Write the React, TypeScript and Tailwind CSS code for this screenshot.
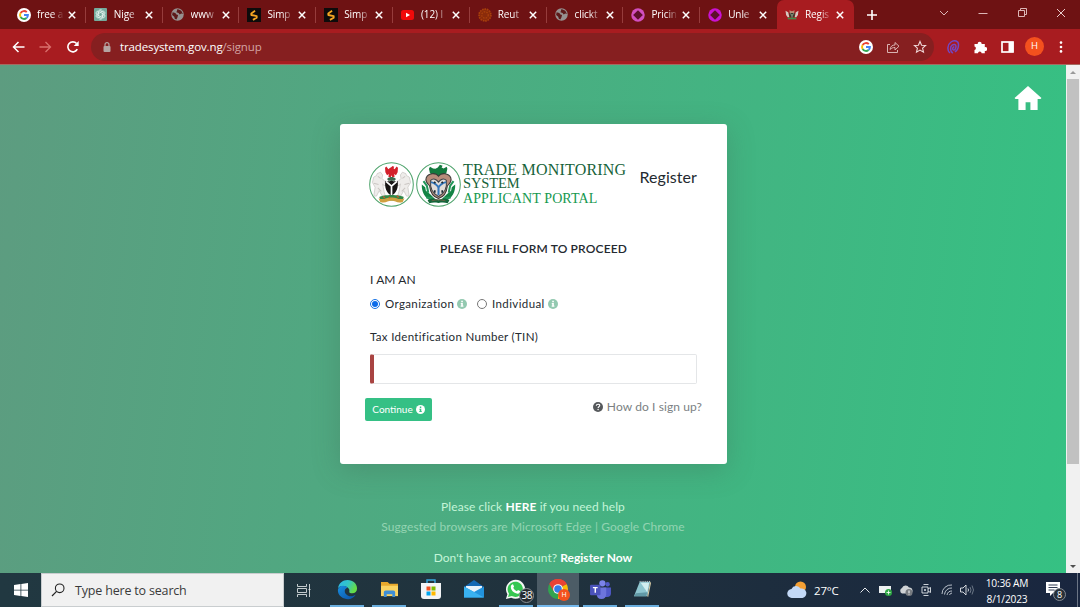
import React from "react";
import type { ReactNode } from "react";

type IconProps = { className?: string };

const Google = ({ className }: IconProps) => (
  <svg viewBox="0 0 48 48" className={className}>
    <circle cx="24" cy="24" r="24" fill="#fff" />
    <g fill="none" strokeWidth="6.5">
      <path d="M33.6 14.4A13.5 13.5 0 0 0 12.3 17.2" stroke="#ea4335" />
      <path d="M12.3 17.2A13.5 13.5 0 0 0 12.3 30.8" stroke="#fbbc05" />
      <path d="M12.3 30.8A13.5 13.5 0 0 0 32.7 34.3" stroke="#34a853" />
      <path d="M32.7 34.3A13.5 13.5 0 0 0 37.5 24H24" stroke="#4285f4" />
    </g>
  </svg>
);

const ChatGpt = () => (
  <svg viewBox="0 0 26 26" className="size-[13px]">
    <rect width="26" height="26" rx="2" fill="#74aa9c" />
    <g fill="none" stroke="#e6f3ef" strokeWidth="1.5">
      {[0, 60, 120, 180, 240, 300].map((a) => (
        <path key={a} transform={`rotate(${a} 13 13)`} d="M9 12V7.500a4 4 0 0 1 7.500-2M10 10.500l6-3.500 4 2.300" />
      ))}
    </g>
  </svg>
);

const Globe = () => (
  <svg viewBox="0 0 24 24" className="size-[13px]">
    <circle cx="12" cy="12" r="11.500" fill="#969090" />
    <path d="M3 8l5 1 2 3 3 1-1 4-2 4-3-1-1-4-4-3zM12 2l7 3 3 6-3-1-3 2-2-3-4-1 1-3z" fill="#5c1a1a" />
  </svg>
);

const Simp = () => (
  <svg viewBox="0 0 26 26" className="size-[14px]">
    <rect width="26" height="26" fill="#0d0b0b" />
    <path d="M15 5l-7 5v3l10 2v3l-7 4" fill="none" stroke="#f5a623" strokeWidth="3.400" strokeLinejoin="round" />
  </svg>
);

const YouTube = () => (
  <svg viewBox="0 0 26 20" className="h-[10px] w-[13px]">
    <rect width="26" height="20" rx="5" fill="#f00a0a" />
    <path d="M10 5.500l8 4.500-8 4.500z" fill="#fff" />
  </svg>
);

const Reuters = () => (
  <svg viewBox="0 0 26 26" className="size-[14px]">
    <circle cx="13" cy="13" r="11" fill="#8a2b0a" />
    <circle cx="13" cy="13" r="11" fill="none" stroke="#a8400c" strokeWidth="3" strokeDasharray="3 1.500" />
    <circle cx="13" cy="13" r="6" fill="none" stroke="#a8400c" strokeWidth="2.500" strokeDasharray="3 2" />
  </svg>
);

const Ring = ({ className }: IconProps) => (
  <svg viewBox="0 0 26 26" className={`size-[14px] ${className}`}>
    <circle cx="13" cy="13" r="12.500" fill="currentColor" />
    <path d="M13 4L22 13 13 22 4 13z" fill="#5e0f2b" />
  </svg>
);

const Arms = () => (
  <svg viewBox="0 0 26 20" className="h-[11px] w-[14px]">
    <path d="M1 3l5 3 2 9H5L2 11zM25 3l-5 3-2 9h3l3-4z" fill="#d6c8c0" />
    <path d="M8 2l5 2 5-2-1 5H9z" fill="#b98a74" />
    <path d="M8 7h10v6l-5 4-5-4z" fill="#3b3a2c" />
    <path d="M10 8l3 4 3-4M13 12v4" stroke="#b9d2b9" strokeWidth="1.300" fill="none" />
    <path d="M5 16h16v3H5z" fill="#3f8f4a" />
  </svg>
);

const Cross = () => (
  <svg viewBox="0 0 8 8" className="size-[8px] shrink-0">
    <path d="M.8.8l6.400 6.400M7.200.8L.8 7.200" stroke="#fff" strokeWidth="1.500" />
  </svg>
);

type TabInfo = { title: string; icon: ReactNode };

const tabs: TabInfo[] = [
  { title: "free a", icon: <Google className="size-[14px]" /> },
  { title: "Nige", icon: <ChatGpt /> },
  { title: "www", icon: <Globe /> },
  { title: "Simp", icon: <Simp /> },
  { title: "Simp", icon: <Simp /> },
  { title: "(12) l", icon: <YouTube /> },
  { title: "Reut", icon: <Reuters /> },
  { title: "clickt", icon: <Globe /> },
  { title: "Pricin", icon: <Ring className="text-[#d24fc0]" /> },
  { title: "Unle", icon: <Ring className="text-[#c913d2]" /> },
];

function TabContent({ title, icon }: TabInfo) {
  return (
    <>
      <span className="flex w-[14px] shrink-0 justify-center">{icon}</span>
      <span className="ml-[6px] w-[27px] overflow-hidden whitespace-nowrap text-[10px] tracking-[-0.100px] text-white [mask-image:linear-gradient(to_right,#000_55%,transparent)]">
        {title}
      </span>
      <span className="ml-[4px] flex">
        <Cross />
      </span>
    </>
  );
}

function TabStrip() {
  return (
    <div className="flex h-[29px] bg-[#6e1213] pl-[9px]">
      {tabs.map((t, i) => (
        <div key={i} className="flex w-[76.800px] shrink-0 items-center pl-[8px]">
          <TabContent {...t} />
          {i < tabs.length - 1 && <span className="ml-auto h-[16px] w-px bg-[#963c3c]" />}
        </div>
      ))}
      <div className="flex w-[77px] shrink-0 items-center rounded-t-[7px] bg-[#a81c20] pl-[8px]">
        <TabContent title="Regis" icon={<Arms />} />
      </div>
      <div className="flex flex-1 items-center">
        <svg viewBox="0 0 12 12" className="ml-[12px] size-[12px]">
          <path d="M6 1v10M1 6h10" stroke="#fff" strokeWidth="1.600" />
        </svg>
        <div className="mb-[4px] ml-auto mr-[14px] flex items-center gap-[29px]">
          <svg viewBox="0 0 10 10" className="size-[10px]">
            <path d="M1 3l4 4 4-4" fill="none" stroke="#dcb6b6" />
          </svg>
          <svg viewBox="0 0 10 10" className="size-[10px]">
            <path d="M.5 5.500h9" stroke="#dcb6b6" />
          </svg>
          <svg viewBox="0 0 10 10" className="size-[10px]">
            <path d="M1.500 2.500h6v6h-6zM3.500 2.500v-2h6v6h-2" fill="none" stroke="#dcb6b6" />
          </svg>
          <svg viewBox="0 0 10 10" className="size-[10px]">
            <path d="M1 1l8 8M9 1L1 9" stroke="#e8cccc" />
          </svg>
        </div>
      </div>
    </div>
  );
}

function Toolbar() {
  return (
    <div className="flex h-[36px] items-center border-b border-[#a56a60] bg-[#a81c20] pl-[12px]">
      <svg viewBox="0 0 13 12" className="h-[12px] w-[13px]">
        <path d="M12.500 6H1.500M6.500 1l-5 5 5 5" fill="none" stroke="#fff" strokeWidth="1.500" />
      </svg>
      <svg viewBox="0 0 13 12" className="ml-[14px] h-[12px] w-[13px]">
        <path d="M.5 6h11M6.500 1l5 5-5 5" fill="none" stroke="#d9706c" strokeWidth="1.300" />
      </svg>
      <svg viewBox="0 0 12 12" className="ml-[15px] size-[12px]">
        <path d="M10.300 8.200A5 5 0 1 1 9.600 2.500" fill="none" stroke="#fff" strokeWidth="1.600" />
        <path d="M11.700 0v5H6.700z" fill="#fff" />
      </svg>
      <div className="ml-[12px] flex h-[28px] w-[843px] items-center rounded-full bg-[#861f20] pl-[12px]">
        <svg viewBox="0 0 8 10" className="h-[10px] w-[8px]">
          <path d="M2 4.500V2.700a2 2 0 0 1 4 0v1.800" fill="none" stroke="#b5a5a3" strokeWidth="1.200" />
          <rect x=".5" y="4" width="7" height="6" rx="1" fill="#b5a5a3" />
        </svg>
        <span className="ml-[9px] text-[11.500px] tracking-[-0.130px] text-white">
          tradesystem.gov.ng<span className="text-[#d3a3a3]">/signup</span>
        </span>
        <div className="ml-auto mr-[7px] flex items-center gap-[13px]">
          <Google className="size-[14px]" />
          <svg viewBox="0 0 14 14" className="size-[14px]">
            <path d="M4 4.500H1.500v8h10V10M4 9.500c.5-3.200 2.300-4.500 5-4.500V2.500L13 6.200 9 10V7.500c-2 0-3.500.5-5 2z" fill="none" stroke="#d9b3b1" strokeLinejoin="round" />
          </svg>
          <svg viewBox="0 0 14 14" className="size-[14px]">
            <path d="M7 1.500l1.600 3.700 4 .3-3 2.700.9 4L7 10.100l-3.500 2.100.9-4-3-2.700 4-.3z" fill="none" stroke="#f0dada" strokeWidth="1.100" />
          </svg>
        </div>
      </div>
      <div className="ml-[12px] flex items-center">
        <svg viewBox="0 0 14 14" className="size-[14px]">
          <g fill="none" stroke="#7247c4" strokeWidth="1.500" strokeLinecap="round">
            <path d="M3.500 12.500C1 10 1.500 4.500 5 2s7.500-1 7.500 2.500c0 3-.7 5.500-3 7" />
            <path d="M6.500 12.800C4 11 4 7 6 5.300s4-.8 4 1.200-1.500 4-2.800 3.300-.2-2.500.6-2.800" />
          </g>
        </svg>
        <svg viewBox="0 0 14 14" className="ml-[13px] size-[14px]">
          <path d="M1.500 4h3.300a1.900 1.900 0 1 1 3.700 0h3.300v3.200a1.900 1.900 0 1 1 0 3.700v2.300H8.600a1.800 1.800 0 0 0-3.600 0H1.500V10a1.800 1.800 0 0 0 0-3.500z" fill="#fff" />
        </svg>
        <svg viewBox="0 0 13 12" className="ml-[14px] h-[12px] w-[13px]">
          <rect x="1" y="1" width="11" height="10" fill="none" stroke="#fff" strokeWidth="1.700" />
          <rect x="7.500" y="1" width="5" height="10" fill="#fff" />
        </svg>
        <span className="ml-[11px] flex size-[19px] items-center justify-center rounded-full bg-[#f4511e] text-[9.500px] text-white">H</span>
        <svg viewBox="0 0 4 12" className="ml-[15px] h-[12px] w-[4px]">
          <circle cx="2" cy="1.600" r="1.300" fill="#fff" />
          <circle cx="2" cy="6" r="1.300" fill="#fff" />
          <circle cx="2" cy="10.400" r="1.300" fill="#fff" />
        </svg>
      </div>
    </div>
  );
}

const CoatOfArms = () => (
  <svg viewBox="0 0 132 132" className="size-[45px]">
    <circle cx="66" cy="66" r="64" fill="#fff" stroke="#4da36b" strokeWidth="3" />
    <g fill="#eeecea" stroke="#c6c2bf" strokeWidth="2">
      <path d="M24 34l10-4 6 8-2 10 10 10 2 10-6 2-4-6 4 22 4 14-8 2-10-18-8 16h-8l4-26-8-14 4-16 8-4z" />
      <path d="M108 34l-10-4-6 8 2 10-10 10-2 10 6 2 4-6-4 22-4 14 8 2 10-18 8 16h8l-4-26 8-14-4-16-8-4z" />
    </g>
    <path d="M26 42l8 6M14 62l14 4M26 76l10 10M106 42l-8 6M118 62l-14 4M106 76l-10 10" stroke="#cbc6c3" strokeWidth="3" />
    <path d="M66 15l3-3 5 2-2 4 3 3 6-8 4 4-1 13-5 9-5-4 1 9h-7l-2-5-2 5h-7l1-9-5 4-5-9-1-13 4-4 6 8 3-3z" fill="#d3202b" />
    <path d="M53 50c4-5 8-6 13-6s9 1 13 6l-4 5H57z" fill="#3c6b50" />
    <path d="M48 55c7 3 12 2 18-1 6 3 11 4 18 1 3 20-3 36-18 44-15-8-21-24-18-44z" fill="#171514" />
    <path d="M50 57l16 14 16-14M66 70v28" fill="none" stroke="#fff" strokeWidth="5" />
    <path d="M30 103c12-8 60-8 72 0l-4 10H34z" fill="#328848" />
    <path d="M28 106c16 8 24-4 38-2 14-2 22 10 38 2l-5 11c-15 6-23-4-33-3-10-1-18 9-33 3z" fill="#d0a040" />
    <path d="M42 101l4 5M82 99l5 5M58 104h4" stroke="#c5592c" strokeWidth="4" />
  </svg>
);

const CustomsBadge = () => (
  <svg viewBox="0 0 132 132" className="size-[45px]">
    <circle cx="66" cy="66" r="64" fill="#fff" stroke="#4da36b" strokeWidth="3" />
    <path d="M64 16l6-8 8 3-3 5 6 3 9-5 2 6-3 13-9 6-8-2-3 6h-8l-3-6-8 2-9-6-3-13 3-6 9 5 7 1z" fill="#137a3e" />
    <path d="M17 66l10 8 2 10 12 10 14 14-10 6C26 106 16 88 17 66zM115 66l-10 8-2 10-12 10-14 14 10 6c19-8 29-26 28-48z" fill="#128444" />
    <path d="M22 56l10 14 4 20M110 56l-10 14-4 20M30 104l20 2M102 104l-20 2" stroke="#23965a" strokeWidth="6" fill="none" />
    <path d="M66 42c8-12 30-10 36 4 4 12-4 18-10 24-2 20-12 33-26 37-14-4-24-17-26-37-6-6-14-12-10-24 6-14 28-16 36-4z" fill="#b88d7b" stroke="#3a3a38" strokeWidth="3" />
    <path d="M43 54c8-8 17-3 23 5 6-8 15-13 23-5 2 18-4 38-23 47-19-9-25-29-23-47z" fill="#e2ddd8" stroke="#3b4248" strokeWidth="3" />
    <path d="M44 59c11 3 18 8 22 16 4-8 11-13 22-16M66 75v22" stroke="#3476ba" strokeWidth="6" fill="none" />
    <path d="M55 83v7M77 83v7M57 62l-4-4M75 62l4-4" stroke="#1b2931" strokeWidth="5" />
    <path d="M34 112c10-7 22-6 32 0 10-6 22-7 32 0l-5 9c-9-3-16-3-27-1-11-2-18-2-27 1z" fill="#14653a" />
    <path d="M46 114c12-4 28-4 40 0" stroke="#6f6044" strokeWidth="3" fill="none" />
  </svg>
);

const InfoDot = ({ className }: IconProps) => (
  <svg viewBox="0 0 20 20" className={className}>
    <circle cx="10" cy="10" r="10" fill="currentColor" />
    <path d="M8.500 3.500h3.200v3H8.500zM7.500 8.200h4.200v5h1.100v2.300H7.300v-2.300h1.200v-2.700h-1z" fill="#fff" />
  </svg>
);

function SignupCard() {
  return (
    <section className="ml-[1px] flex h-[340px] w-[387px] flex-col rounded-[3px] bg-white px-[30px] font-[Lato,'Noto_Sans',sans-serif] text-[#242a30] shadow-[0_6px_28px_rgba(60,90,75,0.28)]">
      <div className="mt-[38px] flex h-[46px]">
        <div className="-ml-[1px] flex gap-[2px]">
          <CoatOfArms />
          <CustomsBadge />
        </div>
        <div className="ml-[2px] flex w-[164px] shrink-0 flex-col whitespace-nowrap font-['Liberation_Serif',serif] text-[#17633a]">
          <span className="h-[14px] text-[16px] leading-[16px] tracking-[0.200px]">TRADE MONITORING</span>
          <span className="h-[15px] text-[14.500px] leading-[15px] tracking-[-0.100px]">SYSTEM</span>
          <span className="text-[14px] leading-[16px] tracking-[0.100px] text-[#16984f]">APPLICANT PORTAL</span>
        </div>
        <h1 className="ml-auto whitespace-nowrap text-[16px] leading-[30px] tracking-[0.060px]">Register</h1>
      </div>
      <h2 className="mt-[32px] text-center text-[12px] font-semibold leading-[18px] tracking-[0.150px]">PLEASE FILL FORM TO PROCEED</h2>
      <div className="mt-[13px] text-[12px] leading-[18px] tracking-[0.050px]">I AM AN</div>
      <div className="mt-[6px] flex h-[18px] items-center text-[11.500px] leading-[18px]">
        <span className="flex size-[10px] items-center justify-center rounded-full border border-[#1673e6]">
          <span className="size-[6px] rounded-full bg-[#0b6bea]" />
        </span>
        <span className="ml-[5px] w-[69px] whitespace-nowrap tracking-[0.380px]">Organization</span>
        <InfoDot className="ml-[3px] size-[10px] text-[#93c9b0]" />
        <span className="ml-[10px] size-[10px] rounded-full border border-[#777]" />
        <span className="ml-[5px] w-[53px] whitespace-nowrap tracking-[0.400px]">Individual</span>
        <InfoDot className="ml-[3px] size-[10px] text-[#93c9b0]" />
      </div>
      <label htmlFor="tin" className="mt-[15px] text-[11.500px] leading-[18px] tracking-[0.320px]">
        Tax Identification Number (TIN)
      </label>
      <input id="tin" className="mt-[8px] h-[30px] w-full shrink-0 rounded-[2px] border border-l-[4px] border-[#e4e6e8] border-l-[#a94442] outline-none" />
      <div className="-mx-[5px] mt-[14px] flex items-start">
        <button className="flex h-[23px] w-[67px] items-center justify-center gap-[3px] rounded-[2px] bg-[#35c085] text-[10px] text-white">
          Continue
          <svg viewBox="0 0 20 20" className="size-[9px]">
            <circle cx="10" cy="10" r="10" fill="#fff" />
            <path d="M8.500 3.500h3.200v3H8.500zM7.500 8.200h4.200v5h1.100v2.300H7.300v-2.300h1.200v-2.700h-1z" fill="#35c085" />
          </svg>
        </button>
        <a className="ml-auto flex items-center gap-[4px] text-[12px] leading-[18px] tracking-[0.100px] text-[#7b7f83]">
          <svg viewBox="0 0 20 20" className="size-[10px]">
            <circle cx="10" cy="10" r="10" fill="#55585b" />
            <path d="M6.500 7.500c.3-4 7-4 7-.5 0 2.500-3.300 2.400-3.300 5" fill="none" stroke="#fff" strokeWidth="2.200" />
            <circle cx="10.200" cy="15" r="1.400" fill="#fff" />
          </svg>
          How do I sign up?
        </a>
      </div>
    </section>
  );
}

function Page() {
  return (
    <div className="flex h-[508px] bg-white">
      <main className="relative flex w-[1066px] flex-col items-center overflow-hidden bg-[linear-gradient(97deg,#5d9c80,#35c183)] pt-[59px]">
        <svg viewBox="0 0 28 26" className="absolute right-[24px] top-[21px] h-[25px] w-[28px]">
          <path d="M14 0l14 12.500-1 1h-3V25h-7.500v-8h-5v8H4V13.500H1l-1-1z" fill="#fff" />
        </svg>
        <SignupCard />
        <div className="mt-[33px] flex flex-col items-center font-[Lato,'Noto_Sans',sans-serif] text-[12px] leading-[20px] text-[#c4f5d8]">
          <p className="tracking-[0.080px]">Please click <b className="text-white">HERE</b> if you need help</p>
          <p className="tracking-[0.070px] text-[#93d4b2]">Suggested browsers are Microsoft Edge | Google Chrome</p>
          <p className="mt-[11px] tracking-[0.020px]">Don't have an account? <b className="text-white">Register Now</b></p>
        </div>
      </main>
      <div className="flex w-[14px] flex-col items-center bg-[#f1f1f1]">
        <svg viewBox="0 0 14 14" className="size-[14px]"><path d="M4 9l3-3 3 3z" fill="#9a9a9a" /></svg>
        <div className="h-[385px] w-[12px] bg-[#c1c1c1]" />
        <svg viewBox="0 0 14 14" className="mt-auto size-[14px]"><path d="M4 6l3 3 3-3z" fill="#505050" /></svg>
      </div>
    </div>
  );
}

const Edge = () => (
  <svg viewBox="0 0 22 22" className="size-[21px]">
    <defs>
      <linearGradient id="edgeTop" x1="0" y1="0" x2="1" y2=".4">
        <stop offset="0" stopColor="#2bb6ed" />
        <stop offset=".55" stopColor="#33c5c6" />
        <stop offset="1" stopColor="#66dc45" />
      </linearGradient>
      <linearGradient id="edgeLow" x1="0" y1="0" x2="1" y2="1">
        <stop offset="0" stopColor="#188fe0" />
        <stop offset="1" stopColor="#0b4fa5" />
      </linearGradient>
    </defs>
    <path d="M1 10C2 4 6 1 11 1c6 0 10 4 10 9 0 3-2 5-5 5-4 0-3-2-3-3 0-4-9-7-12-2z" fill="url(#edgeTop)" />
    <path d="M1 11c1-5 8-5 10-2-5 2-3 8 2 9 3 .5 5-.5 6.500-1.500C17 21 12 22 8 20.500 3 19 .5 15 1 11z" fill="url(#edgeLow)" />
  </svg>
);

const Folder = () => (
  <svg viewBox="0 0 20 18" className="h-[17px] w-[19px]">
    <path d="M1 1h7l2 2h9v13H1z" fill="#e8a92c" />
    <path d="M1 5h18v11H1z" fill="#fbd462" />
    <path d="M4 17v-5q0-2 2-2h8q2 0 2 2v5h-3v-3H7v3z" fill="#3f8fd6" />
  </svg>
);

const Store = () => (
  <svg viewBox="0 0 20 20" className="size-[20px]">
    <path d="M6 5V1h8v4" fill="none" stroke="#38a9e0" strokeWidth="1.400" />
    <path d="M0 4h20v13q0 3-3 3H3q-3 0-3-3z" fill="#f2f4f6" />
    <path d="M5.500 7.500h4v4h-4z" fill="#f25022" />
    <path d="M10.500 7.500h4v4h-4z" fill="#7fba00" />
    <path d="M5.500 12.500h4v4h-4z" fill="#00a4ef" />
    <path d="M10.500 12.500h4v4h-4z" fill="#ffb900" />
  </svg>
);

const Mail = () => (
  <svg viewBox="0 0 20 20" className="size-[20px]">
    <path d="M0 8l10-7 10 7z" fill="#1569b5" />
    <path d="M2 7h16v7H2z" fill="#eaf3fb" />
    <path d="M0 7.500L10 13l10-5.500V18.500H0z" fill="#2293dd" />
    <path d="M0 7.500V18.500h20z" fill="#39b2f1" />
  </svg>
);

const WhatsApp = () => (
  <svg viewBox="0 0 22 22" className="size-[21px]">
    <path d="M1 21l1.500-5A10 10 0 1 1 6.500 19.700z" fill="#f5f7f5" />
    <path d="M3.200 18.800l1-3.400a8 8 0 1 1 2.900 2.500z" fill="#35c751" />
    <path d="M7.500 5.700c.7-.3 1-.2 1.300.5l.7 1.800-.9 1.200c.8 1.700 2 2.800 3.800 3.600l1.200-1.200 2.200 1c.3 2-1.300 2.900-2.700 2.800-4.200-.5-7.300-4-7-7.500.1-1 .6-1.800 1.400-2.200z" fill="#fff" />
  </svg>
);

const Chrome = () => (
  <svg viewBox="0 0 22 22" className="size-[20px]">
    <path d="M11 11L1.500 5.500A11 11 0 0 1 20.500 5.500z" fill="#e94235" />
    <path d="M11 11l9.500-5.500A11 11 0 0 1 11 22z" fill="#fbbc04" />
    <path d="M11 11v11A11 11 0 0 1 1.500 5.500z" fill="#32a350" />
    <path d="M1.500 5.500A11 11 0 0 1 20.500 5.500L20 6H11L6.200 13.500z" fill="#e94235" />
    <circle cx="11" cy="11" r="5.300" fill="#fff" />
    <circle cx="11" cy="11" r="4.200" fill="#347ce8" />
  </svg>
);

const Teams = () => (
  <svg viewBox="0 0 22 20" className="h-[19px] w-[21px]">
    <circle cx="13" cy="3.500" r="3.300" fill="#7b83eb" />
    <circle cx="18.500" cy="4.500" r="2.300" fill="#5059c9" />
    <path d="M14 8h8v6q0 4-4 4h-4z" fill="#5059c9" />
    <path d="M7 8h10v7q0 5-5 5t-5-5z" fill="#6d75dc" />
    <rect x="0" y="5" width="11" height="11" rx="1" fill="#4b53bc" />
    <path d="M3 8h5M5.500 8v5.500" stroke="#fff" strokeWidth="1.500" />
  </svg>
);

const Notepad = () => (
  <svg viewBox="0 0 20 20" className="size-[19px]">
    <path d="M7 2h11l-3 15H1z" fill="#8ec5cf" />
    <path d="M8 3h9l-2 10z" fill="#d3eef0" />
    <path d="M3 14l12-1-1 4H1z" fill="#6198a5" />
    <path d="M18 2l1 1-3 15-1-1z" fill="#d7c9a4" />
    <path d="M7 1.500h11" stroke="#e8eef0" strokeDasharray="1 1" />
  </svg>
);

type TaskProps = { children: ReactNode; open?: boolean; active?: boolean };

function Task({ children, open, active }: TaskProps) {
  return (
    <div className={`flex h-full w-[42.200px] shrink-0 flex-col items-center ${active ? "bg-[#4c5c66]" : ""}`}>
      <span className="relative flex flex-1 items-center">{children}</span>
      <span className={`h-[2px] ${active ? "w-full bg-[#76b9ed]" : "w-[34px]"} ${open ? "bg-[#6aaede]" : ""}`} />
    </div>
  );
}

function Taskbar() {
  return (
    <div className="flex h-[34px] items-stretch bg-linear-to-r from-[#213841] via-[#20323d] to-[#19263f] text-white">
      <div className="flex w-[41px] items-center justify-center">
        <svg viewBox="0 0 14 14" className="size-[14px]">
          <path d="M0 2l6.500-1v5.700H0zM7.300.9L14 0v6.700H7.300zM0 7.400h6.500V13L0 12.100zM7.300 7.400H14V14l-6.700-.9z" fill="#fff" />
        </svg>
      </div>
      <div className="flex w-[243px] items-center border border-[#c9cdcf] bg-[#f1f1f1] pl-[9px]">
        <svg viewBox="0 0 14 14" className="size-[14px]">
          <circle cx="8.700" cy="5.300" r="4.300" fill="none" stroke="#222" strokeWidth="1.100" />
          <path d="M5.600 8.400L1 13" stroke="#222" strokeWidth="1.200" />
        </svg>
        <span className="ml-[10px] mt-[3px] text-[12.500px] tracking-[-0.180px] text-[#3a3a3a]">Type here to search</span>
      </div>
      <div className="flex w-[42px] items-center justify-center">
        <svg viewBox="0 0 14 13" className="ml-[-2px] h-[13px] w-[14px]">
          <path d="M.5 0v2.500h9V0M.5 13v-2.500h9V13M.5 4.500h9v4h-9zM12.500 0v13M11.500 5.500h2" fill="none" stroke="#d7dddf" strokeWidth=".9" />
        </svg>
      </div>
      <Task open><Edge /></Task>
      <Task open><Folder /></Task>
      <Task><Store /></Task>
      <Task><Mail /></Task>
      <Task open>
        <WhatsApp />
        <span className="absolute -right-[8px] bottom-[2px] flex size-[15px] items-center justify-center rounded-full border border-[#8b9297] bg-[#252b30] text-[10px] tracking-[-0.300px]">38</span>
      </Task>
      <Task active>
        <Chrome />
        <span className="absolute -right-[2px] bottom-[4px] flex size-[12px] items-center justify-center rounded-full bg-[#f4511e] text-[7px]">H</span>
      </Task>
      <Task open><Teams /></Task>
      <Task open><Notepad /></Task>
      <div className="ml-auto flex items-center">
        <svg viewBox="0 0 20 18" className="h-[18px] w-[20px]">
          <circle cx="13.500" cy="6" r="5.500" fill="#f4a034" />
          <path d="M5 17a4.500 4.500 0 0 1-.5-9 5 5 0 0 1 9-.5 4.800 4.800 0 0 1 2 9.500z" fill="#c3d9f6" />
        </svg>
        <span className="ml-[7px] mt-[2px] w-[26px] whitespace-nowrap text-[11.500px] tracking-[-0.200px]">27°C</span>
        <svg viewBox="0 0 10 6" className="ml-[20px] h-[6px] w-[10px]"><path d="M.5 5.500L5 1l4.500 4.500" fill="none" stroke="#e5e8ec" /></svg>
        <svg viewBox="0 0 13 11" className="ml-[9px] h-[11px] w-[13px]">
          <path d="M0 1h12v7H0z" fill="#eef1f2" /><circle cx="9.500" cy="7.500" r="3.500" fill="#2da743" /><path d="M9.500 5.500v4M7.500 7.500h4" stroke="#fff" strokeWidth=".8" />
        </svg>
        <svg viewBox="0 0 14 11" className="ml-[7px] h-[11px] w-[14px]">
          <path d="M3 8.500a3 3 0 0 1 0-5.500 3.800 3.800 0 0 1 7-.5 3 3 0 0 1 1 6z" fill="#cfd2d5" /><circle cx="10" cy="7.500" r="3.500" fill="#777b80" /><path d="M10 5.500v2.700M10 8.800v.8" stroke="#fff" />
        </svg>
        <svg viewBox="0 0 10 12" className="ml-[8px] h-[12px] w-[10px]">
          <path d="M2.500.5h5M2.500 11.500h5M1 3h6v6H1zM7 5l2.500-1.500v5L7 7" fill="none" stroke="#dfe3e8" strokeWidth=".9" /><circle cx="4" cy="6" r="1" fill="#dfe3e8" />
        </svg>
        <svg viewBox="0 0 12 12" className="ml-[10px] size-[12px]">
          <path d="M1 10A9 9 0 0 1 11 1M3.500 10.500A7 7 0 0 1 11 4M6 11a5 5 0 0 1 5-4M8.500 11a3 3 0 0 1 2.500-2" fill="none" stroke="#b8c0ca" />
        </svg>
        <svg viewBox="0 0 14 12" className="ml-[7px] h-[12px] w-[14px]">
          <path d="M.5 4h2.500l3-3v10L3 8H.5z" fill="none" stroke="#e3e6ea" strokeWidth=".9" /><path d="M8 4.500q1 1.500 0 3" fill="none" stroke="#e3e6ea" strokeWidth=".9" /><path d="M10 3q2 3 0 6M12 1.500q3 4.500 0 9" fill="none" stroke="#75808f" strokeWidth=".9" />
        </svg>
        <div className="ml-[11px] mt-[1px] flex w-[44px] flex-col items-center whitespace-nowrap text-[10.200px] leading-[16px] tracking-[-0.200px]">
          <span>10:36 AM</span>
          <span>8/1/2023</span>
        </div>
        <div className="relative ml-[17px] mr-[11px] mt-[3px] h-[19px] w-[20px]">
          <svg viewBox="0 0 14 14" className="size-[14px]">
            <path d="M0 0h14v11H7l-3 3v-3H0z" fill="#fff" /><path d="M2.500 3h9M2.500 5.500h9M2.500 8h6" stroke="#19263f" strokeWidth=".9" />
          </svg>
          <span className="absolute bottom-0 right-0 flex size-[13px] items-center justify-center rounded-full border border-[#858b94] bg-[#273039] text-[9px]">8</span>
        </div>
        <div className="mr-[2px] h-full w-px bg-[#6b7585]" />
      </div>
    </div>
  );
}

export default function App() {
  return (
    <div className="h-[607px] w-[1080px] overflow-hidden font-['Open_Sans','Noto_Sans',sans-serif]">
      <TabStrip />
      <Toolbar />
      <Page />
      <Taskbar />
    </div>
  );
}
